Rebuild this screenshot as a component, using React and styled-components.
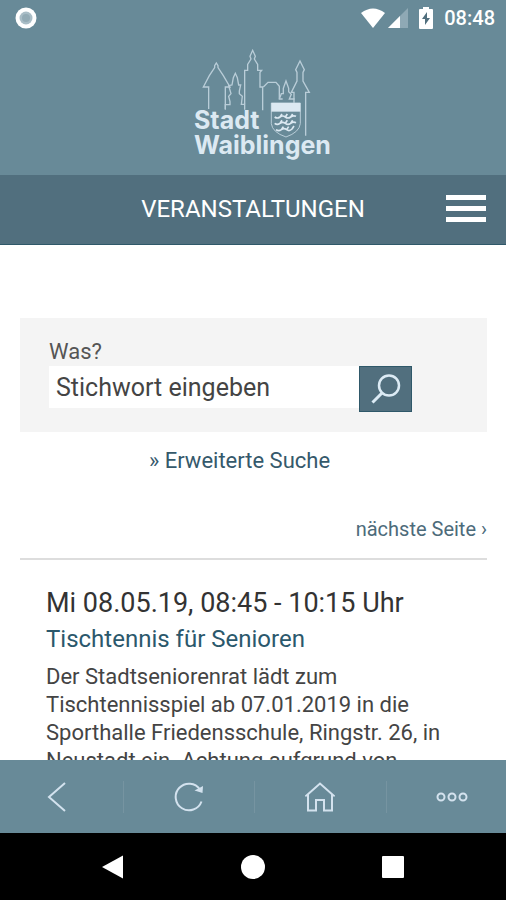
import React, { useState } from 'react';
import styled, { createGlobalStyle, css } from 'styled-components';

const GlobalStyle = createGlobalStyle`
  * {
    box-sizing: border-box;
  }
  body {
    margin: 0;
    background-color: #ffffff;
    font-family: Roboto, "Liberation Sans", sans-serif;
  }
  button {
    padding: 0;
    border: 0;
    background: none;
    cursor: pointer;
  }
  svg {
    display: block;
  }
`;

const Screen = styled.div`
  display: flex;
  flex-direction: column;
  height: 100vh;
`;
const Header = styled.header`
  background-color: #688a98;
`;
const StatusBar = styled.div`
  display: flex;
  align-items: center;
  justify-content: space-between;
  height: 35px;
  padding: 0 11px 0 15px;
`;
const StatusIcons = styled.div`
  display: flex;
  align-items: center;
  gap: 11px;
`;
const Reception = styled.div`
  display: flex;
  align-items: center;
  gap: 2px;
`;
const Clock = styled.time`
  color: #ffffff;
  font-size: 20px;
  font-weight: 500;
  line-height: 24px;
`;
const LogoLink = styled.a`
  display: flex;
  justify-content: center;
  height: 140px;
  padding-left: 24px;
`;
const LogoText = styled.text`
  fill: #dce9f2;
  font-family: Inter, sans-serif;
  font-size: 25px;
  font-weight: 700;
`;
const TitleBar = styled.div`
  display: grid;
  grid-template-columns: 40px 1fr 40px;
  align-items: center;
  height: 70px;
  padding: 0 20px 2px;
  background-color: #516f7e;
  border-bottom: 1px solid #2f5869;
`;
const Title = styled.h1`
  grid-column: 2;
  margin: 0;
  color: #ffffff;
  font-size: 24px;
  font-weight: 400;
  line-height: 28px;
  text-align: center;
`;
const MenuButton = styled.button`
  display: flex;
  flex-direction: column;
  gap: 6px;
`;
const MenuLine = styled.span`
  width: 40px;
  height: 5px;
  background-color: #ffffff;
`;
const Content = styled.main`
  flex: 1;
  min-height: 0;
  padding: 73px 19px 0 20px;
  overflow-y: auto;
  scrollbar-width: none;
`;
const SearchForm = styled.form`
  padding: 20px 75px 20px 29px;
  background-color: #f4f4f4;
`;
const SearchLabel = styled.label`
  display: block;
  color: #555555;
  font-size: 22px;
  line-height: 28px;
`;
const SearchRow = styled.div`
  display: flex;
  align-items: flex-start;
`;
const SearchInput = styled.input`
  flex: 1;
  min-width: 0;
  height: 42px;
  padding: 0 7px;
  border: 0;
  background-color: #ffffff;
  color: #444444;
  font-family: inherit;
  font-size: 25px;

  &::placeholder {
    color: #444444;
    opacity: 1;
  }
`;
const SearchButton = styled.button`
  display: flex;
  align-items: center;
  justify-content: center;
  width: 53px;
  height: 46px;
  background-color: #516f7e;
  border: 1px solid #2f5869;
`;
const TextLink = styled.a`
  color: #35596b;
  font-size: 22px;
  line-height: 28px;
  text-decoration: none;
  ${(props) => props.$small && css`
    color: #4d6b7a;
    font-size: 20px;
  `};
`;
const Advanced = styled.div`
  padding: 15px 28px 0 0;
  text-align: center;
`;
const Pager = styled.nav`
  display: flex;
  justify-content: flex-end;
  padding: 40px 0 15px;
  border-bottom: 2px solid #dddddd;
`;
const Event = styled.article`
  padding: 25px 26px;
  color: #444444;
`;
const EventDate = styled.h2`
  margin: 0;
  color: #333333;
  font-size: 27px;
  font-weight: 400;
  line-height: 36px;
`;
const EventTitle = styled.h3`
  margin: 0;
  font-size: 24px;
  font-weight: 400;
  line-height: 36px;

  a {
    color: #2b586c;
    text-decoration: none;
  }
`;
const EventText = styled.p`
  margin: 6px 0 0;
  font-size: 22px;
  line-height: 28px;
`;
const Toolbar = styled.nav`
  height: 73px;
  overflow: hidden;
  background-color: #688a98;
`;
// the outer buttons run slightly past the screen edges
const ToolRow = styled.div`
  display: grid;
  grid-template-columns: repeat(4, 1fr);
  align-items: center;
  height: 100%;
  margin: 0 -11px 0 -9px;
`;
const ToolButton = styled.button`
  display: flex;
  align-items: center;
  justify-content: center;
  height: 32px;
  & + & {
    border-left: 1px solid #7694a1;
  }
`;
const SystemBar = styled.div`
  display: flex;
  align-items: center;
  justify-content: center;
  gap: 116px;
  height: 67px;
  background-color: #000000;
`;

const Logo = () => (
  <svg width="170" height="135" viewBox="0 0 170 135" role="img" aria-label="Stadt Waiblingen">
    <g transform="scale(0.3333)" fill="none" stroke="#b9cdd8" strokeWidth="4">
      <path d="M86 222 V156 H70 L88 122 L104 98 V92 L109 84 L114 92 V98 L130 122 L150 156 H136 V222" />
      <path d="M136 224 V209 H150 V200 L146 184 L153 176 L146 152 L156 150 L160 128 L166 115 L172 128 L176 150 H182 L178 168 V176 L187 184 L184 208 H194 V224" />
      <path d="M194 208 V106 H203 V88 L213 72 L210 64 L218 46 L226 64 L223 72 L233 88 V106 H245 L240 112 V156 H248 V226" />
      <path d="M250 156 L264 142 H288 L298 154 V192 H308" />
      <path d="M298 192 L304 176 H310 V160 L318 138 L326 160 V170 L334 178 L328 192 H344" />
      <path d="M342 204 V172 H334 L351 138 V112 L347 104 L360 78 L373 104 L369 112 V138 L388 172 H377 V302" />
    </g>
    <g transform="scale(0.3333)">
      <path d="M274 204 H361 V266 Q358 292 318 306 Q277 292 274 266 Z" fill="#688a98" stroke="#b9cdd8" strokeWidth="3" />
      <path d="M274 204 H361 V230 H274 Z" fill="#dce9f2" />
      <g fill="none" stroke="#dce9f2" strokeWidth="5">
        <path d="M284 246 q8 6 16 0 t16 0 t16 0 t16 -2 M300 246 l6 -9 M316 246 l6 -9 M332 246 l6 -9" />
        <path d="M284 265 q8 6 16 0 t16 0 t16 0 t16 -2 M300 265 l6 -9 M316 265 l6 -9 M332 265 l6 -9" />
        <path d="M288 284 q8 6 16 0 t16 0 t16 -2 M304 284 l6 -9 M320 284 l6 -9 M336 282 l6 -9" />
      </g>
    </g>
    <LogoText>
      <tspan x="14" y="94">Stadt</tspan>
      <tspan x="14" y="119">Waiblingen</tspan>
    </LogoText>
  </svg>
);

const App = () => {
  const [keyword, setKeyword] = useState('');
  return (
    <>
      <GlobalStyle />
      <Screen>
        <Header>
          <StatusBar>
            <svg width="22" height="22" viewBox="0 0 22 22">
              <circle cx="11" cy="11" r="10.5" fill="#ffffff" />
              <circle cx="11" cy="11" r="6.5" fill="#a9bdc6" />
              <circle cx="11" cy="11" r="4" fill="#93abb5" />
            </svg>
            <StatusIcons>
              <Reception>
                <svg width="26" height="22" viewBox="0 0 26 22">
                  <path d="M1 6 Q13 -3 25 6 L13 21 Z" fill="#ffffff" />
                </svg>
                <svg width="20" height="20" viewBox="0 0 20 20">
                  <path d="M20 0 V20 H0 Z" fill="#8fa9b5" />
                  <path d="M12 8 V20 H0 Z" fill="#ffffff" />
                </svg>
              </Reception>
              <svg width="14" height="22" viewBox="0 0 14 22">
                <path d="M4 2 V0 h6 V2 h3 q1 0 1 1 v18 q0 1 -1 1 h-12 q-1 0 -1 -1 v-18 q0 -1 1 -1 Z" fill="#ffffff" />
                <path d="M8 5 L3 12 h3 v6 l5 -7 h-3 Z" fill="#516f7e" />
              </svg>
              <Clock>08:48</Clock>
            </StatusIcons>
          </StatusBar>
          <LogoLink href="#start"><Logo /></LogoLink>
        </Header>
        <TitleBar>
          <Title>VERANSTALTUNGEN</Title>
          <MenuButton type="button" aria-label="Menü">
            <MenuLine />
            <MenuLine />
            <MenuLine />
          </MenuButton>
        </TitleBar>
        <Content>
          <SearchForm onSubmit={(e) => e.preventDefault()}>
            <SearchLabel htmlFor="keyword">Was?</SearchLabel>
            <SearchRow>
              <SearchInput
                id="keyword"
                placeholder="Stichwort eingeben"
                value={keyword}
                onChange={(e) => setKeyword(e.target.value)}
              />
              <SearchButton type="submit" aria-label="Suchen">
                <svg width="30" height="30" viewBox="0 0 30 30" fill="none" stroke="#dcebf5" strokeWidth="2.5">
                  <circle cx="18" cy="11.5" r="10" />
                  <path d="M11 19 L1.5 28.5" strokeWidth="3" />
                </svg>
              </SearchButton>
            </SearchRow>
          </SearchForm>
          <Advanced>
            <TextLink href="#suche">» Erweiterte Suche</TextLink>
          </Advanced>
          <Pager>
            <TextLink href="#seite-2" $small>nächste Seite ›</TextLink>
          </Pager>
          <Event>
            <EventDate>Mi 08.05.19, 08:45 - 10:15 Uhr</EventDate>
            <EventTitle><a href="#tischtennis">Tischtennis für Senioren</a></EventTitle>
            <EventText>
              Der Stadtseniorenrat lädt zum Tischtennisspiel ab 07.01.2019 in die
              Sporthalle Friedensschule, Ringstr. 26, in Neustadt ein. Achtung aufgrund von
            </EventText>
          </Event>
        </Content>
        <Toolbar>
          <ToolRow>
            <ToolButton type="button" aria-label="Zurück">
              <svg width="20" height="30" viewBox="0 0 20 30" fill="none" stroke="#d3e2ee" strokeWidth="2">
                <path d="M18 1 L2 15 L18 29" />
              </svg>
            </ToolButton>
            <ToolButton type="button" aria-label="Neu laden">
              <svg width="30" height="30" viewBox="0 0 30 30" fill="none" stroke="#d3e2ee" strokeWidth="2">
                <path d="M27.5 19.500 A13.3 13.3 0 1 1 26 7.500" />
                <path d="M20.500 8.500 L29 4 L28.500 11 Z" fill="#d3e2ee" stroke="none" />
              </svg>
            </ToolButton>
            <ToolButton type="button" aria-label="Startseite">
              <svg width="30" height="30" viewBox="0 0 30 30" fill="none" stroke="#d3e2ee" strokeWidth="2">
                <path d="M1.500 13.500 L15 1.500 L28.500 13.500 H27 V28.500 H19 V18 H11 V28.500 H3 V13.500 Z" />
              </svg>
            </ToolButton>
            <ToolButton type="button" aria-label="Mehr">
              <svg width="32" height="10" viewBox="0 0 32 10" fill="none" stroke="#d3e2ee" strokeWidth="2">
                <circle cx="5" cy="5" r="3.500" />
                <circle cx="16" cy="5" r="3.500" />
                <circle cx="27" cy="5" r="3.500" />
              </svg>
            </ToolButton>
          </ToolRow>
        </Toolbar>
        <SystemBar>
          <button type="button" aria-label="System zurück">
            <svg width="24" height="24" viewBox="0 0 24 24" fill="#ffffff">
              <path d="M1 12 L22 0.500 V23.500 Z" />
            </svg>
          </button>
          <button type="button" aria-label="System Home">
            <svg width="24" height="24" viewBox="0 0 24 24" fill="#ffffff">
              <circle cx="12" cy="12" r="12" />
            </svg>
          </button>
          <button type="button" aria-label="Übersicht">
            <svg width="24" height="24" viewBox="0 0 24 24" fill="#ffffff">
              <rect x="1" y="1" width="22" height="22" rx="1" />
            </svg>
          </button>
        </SystemBar>
      </Screen>
    </>
  );
};

export default App;
